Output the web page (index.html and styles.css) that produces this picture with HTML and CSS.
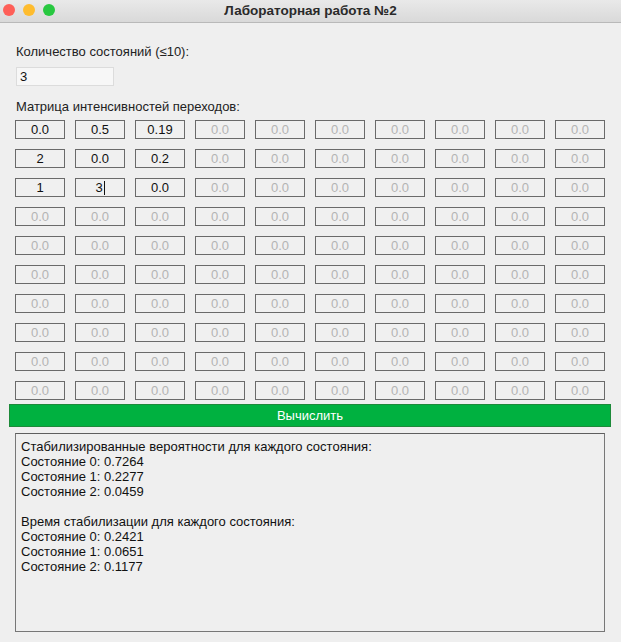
FILE: index.html
```html
<!DOCTYPE html>
<html lang="ru">
<head>
<meta charset="utf-8">
<title>Лабораторная работа №2</title>
<link rel="stylesheet" href="styles.css">
</head>
<body>
<div class="window">
  <header class="titlebar">
    <div class="lights">
      <span class="light red"></span>
      <span class="light yellow"></span>
      <span class="light green"></span>
    </div>
    <div class="title">Лабораторная работа №2</div>
    <div></div>
  </header>
  <main class="content">
    <div class="label first">Количество состояний (≤10):</div>
    <div class="entry">3</div>
    <div class="label second">Матрица интенсивностей переходов:</div>
    <div class="matrix">
      <div class="cell">0.0</div><div class="cell">0.5</div><div class="cell">0.19</div><div class="cell empty">0.0</div><div class="cell empty">0.0</div><div class="cell empty">0.0</div><div class="cell empty">0.0</div><div class="cell empty">0.0</div><div class="cell empty">0.0</div><div class="cell empty">0.0</div>
      <div class="cell">2</div><div class="cell">0.0</div><div class="cell">0.2</div><div class="cell empty">0.0</div><div class="cell empty">0.0</div><div class="cell empty">0.0</div><div class="cell empty">0.0</div><div class="cell empty">0.0</div><div class="cell empty">0.0</div><div class="cell empty">0.0</div>
      <div class="cell">1</div><div class="cell">3<span class="caret"></span></div><div class="cell">0.0</div><div class="cell empty">0.0</div><div class="cell empty">0.0</div><div class="cell empty">0.0</div><div class="cell empty">0.0</div><div class="cell empty">0.0</div><div class="cell empty">0.0</div><div class="cell empty">0.0</div>
      <div class="cell empty">0.0</div><div class="cell empty">0.0</div><div class="cell empty">0.0</div><div class="cell empty">0.0</div><div class="cell empty">0.0</div><div class="cell empty">0.0</div><div class="cell empty">0.0</div><div class="cell empty">0.0</div><div class="cell empty">0.0</div><div class="cell empty">0.0</div>
      <div class="cell empty">0.0</div><div class="cell empty">0.0</div><div class="cell empty">0.0</div><div class="cell empty">0.0</div><div class="cell empty">0.0</div><div class="cell empty">0.0</div><div class="cell empty">0.0</div><div class="cell empty">0.0</div><div class="cell empty">0.0</div><div class="cell empty">0.0</div>
      <div class="cell empty">0.0</div><div class="cell empty">0.0</div><div class="cell empty">0.0</div><div class="cell empty">0.0</div><div class="cell empty">0.0</div><div class="cell empty">0.0</div><div class="cell empty">0.0</div><div class="cell empty">0.0</div><div class="cell empty">0.0</div><div class="cell empty">0.0</div>
      <div class="cell empty">0.0</div><div class="cell empty">0.0</div><div class="cell empty">0.0</div><div class="cell empty">0.0</div><div class="cell empty">0.0</div><div class="cell empty">0.0</div><div class="cell empty">0.0</div><div class="cell empty">0.0</div><div class="cell empty">0.0</div><div class="cell empty">0.0</div>
      <div class="cell empty">0.0</div><div class="cell empty">0.0</div><div class="cell empty">0.0</div><div class="cell empty">0.0</div><div class="cell empty">0.0</div><div class="cell empty">0.0</div><div class="cell empty">0.0</div><div class="cell empty">0.0</div><div class="cell empty">0.0</div><div class="cell empty">0.0</div>
      <div class="cell empty">0.0</div><div class="cell empty">0.0</div><div class="cell empty">0.0</div><div class="cell empty">0.0</div><div class="cell empty">0.0</div><div class="cell empty">0.0</div><div class="cell empty">0.0</div><div class="cell empty">0.0</div><div class="cell empty">0.0</div><div class="cell empty">0.0</div>
      <div class="cell empty">0.0</div><div class="cell empty">0.0</div><div class="cell empty">0.0</div><div class="cell empty">0.0</div><div class="cell empty">0.0</div><div class="cell empty">0.0</div><div class="cell empty">0.0</div><div class="cell empty">0.0</div><div class="cell empty">0.0</div><div class="cell empty">0.0</div>
    </div>
    <button class="calc" type="button">Вычислить</button>
    <div class="output">
      <div>Стабилизированные вероятности для каждого состояния:</div>
      <div>Состояние 0: 0.7264</div>
      <div>Состояние 1: 0.2277</div>
      <div>Состояние 2: 0.0459</div>
      <div class="blank"></div>
      <div>Время стабилизации для каждого состояния:</div>
      <div>Состояние 0: 0.2421</div>
      <div>Состояние 1: 0.0651</div>
      <div>Состояние 2: 0.1177</div>
    </div>
  </main>
</div>
</body>
</html>
```

FILE: styles.css
```css
* { box-sizing: border-box; }

html, body {
  margin: 0;
  padding: 0;
  background: #efefef;
}

body {
  font-family: "Liberation Sans", Arial, sans-serif;
  font-size: 13px;
  color: #1e1e1e;
}

.window {
  width: 621px;
  height: 642px;
  display: flex;
  flex-direction: column;
  overflow: hidden;
}

.titlebar {
  height: 23px;
  display: grid;
  grid-template-columns: 1fr auto 1fr;
  align-items: center;
  background: linear-gradient(#e9e9e9, #d9d9d9);
  border-bottom: 1px solid #b9b9b9;
}

.lights {
  display: flex;
  gap: 8px;
  padding-left: 3px;
  padding-bottom: 2px;
}

.light {
  width: 12px;
  height: 12px;
  border-radius: 50%;
}
.light.red { background: #fe5f58; }
.light.yellow { background: #febc2e; }
.light.green { background: #28c840; }

.title {
  font-weight: bold;
  font-size: 13.5px;
  color: #2a2a2a;
  padding-bottom: 1px;
}

.content {
  display: flex;
  flex-direction: column;
  padding: 0 10px 0 9px;
}

.label {
  line-height: 15px;
  padding-left: 7px;
  color: #222;
}
.label.first { margin-top: 21px; }
.label.second { margin-top: 13px; }

.entry {
  margin-top: 8px;
  margin-left: 7px;
  width: 98px;
  height: 19px;
  background: #f7f7f7;
  border: 1px solid #dcdcdc;
  padding-left: 3px;
  line-height: 17px;
  color: #111;
}

.matrix {
  margin-top: 6px;
  margin-left: 6px;
  display: grid;
  grid-template-columns: repeat(10, 50px);
  grid-auto-rows: 19px;
  column-gap: 10px;
  row-gap: 10px;
}

.cell {
  border: 1px solid #6a6a6a;
  background: #f0f0f0;
  display: flex;
  align-items: center;
  justify-content: center;
  color: #111;
  font-size: 13px;
}
.cell.empty { color: #b4b4b4; }

.caret {
  display: inline-block;
  width: 1px;
  height: 14px;
  background: #111;
  margin-left: 1px;
}

.calc {
  margin-top: 4px;
  height: 23px;
  width: 100%;
  border: 1px solid #1d8a3a;
  background: #00b140;
  color: #fff;
  font-family: inherit;
  font-size: 13px;
  padding: 0;
}

.output {
  margin-top: 6px;
  margin-left: 6px;
  width: 590px;
  height: 199px;
  border: 1px solid #777;
  border-top-color: #5e5e5e;
  padding: 5px 0 0 5px;
  line-height: 15px;
  color: #111;
}

.output .blank { height: 15px; }
```
